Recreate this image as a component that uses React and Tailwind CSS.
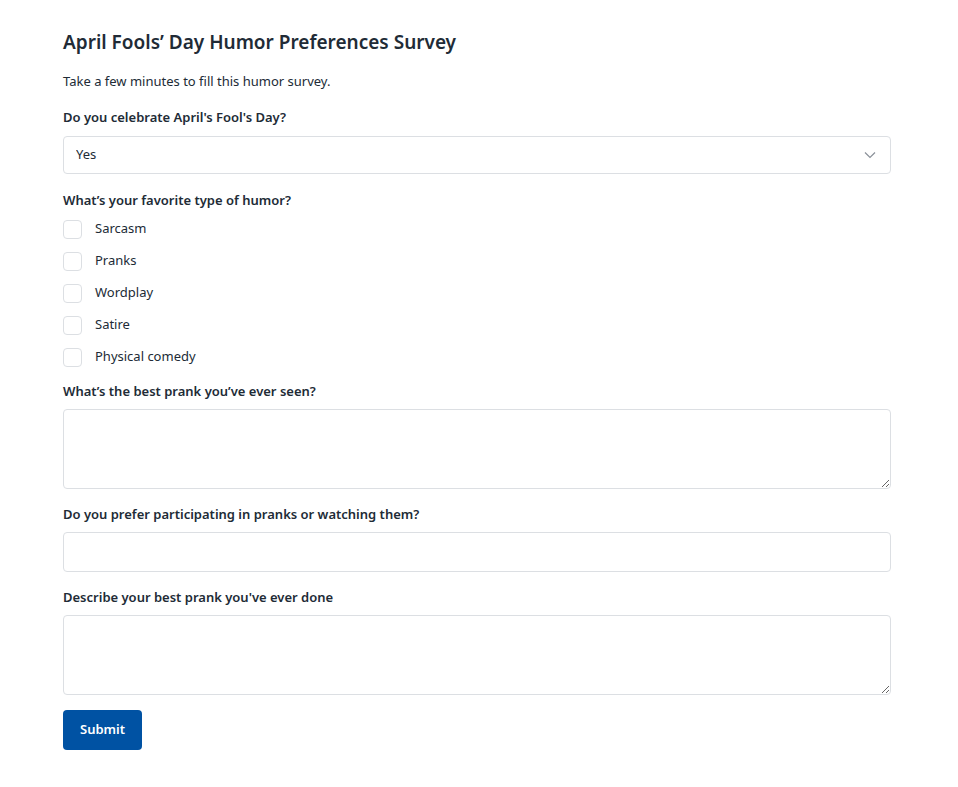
import React from 'react';

const humorTypes = ['Sarcasm', 'Pranks', 'Wordplay', 'Satire', 'Physical comedy'];

const Label = ({ children }) => (
    <label className="block text-[13px] leading-[20px] font-semibold text-[#212b36]">{children}</label>
);

export default function App() {
    return (
        <div
            className="min-h-screen bg-white pl-[63px] pr-[67px] pt-[28px] pb-10 text-[#212b36]"
            style={{ fontFamily: '"Segoe UI", "Noto Sans", "Open Sans", sans-serif' }}
        >
            <h1 className="text-[19px] leading-[28px] font-semibold">April Fools’ Day Humor Preferences Survey</h1>
            <p className="mt-[15px] text-[13px] leading-[20px]">Take a few minutes to fill this humor survey.</p>

            <div className="mt-[16px]">
                <Label>Do you celebrate April's Fool's Day?</Label>
                <div className="relative mt-[9px]">
                    <select className="appearance-none w-full h-[38px] rounded-[4px] border border-[#dcdfe3] bg-white pl-[12px] pr-10 text-[13px] outline-none">
                        <option>Yes</option>
                        <option>No</option>
                    </select>
                    <svg className="absolute right-[15px] top-[15px] pointer-events-none" width="12" height="8" viewBox="0 0 12 8" fill="none">
                        <path d="M1 1.5l5 5 5-5" stroke="#8a9099" strokeWidth="1.2" />
                    </svg>
                </div>
            </div>

            <div className="mt-[16px]">
                <Label>What’s your favorite type of humor?</Label>
                <div className="mt-[9px] flex flex-col gap-[12px]">
                    {humorTypes.map((t) => (
                        <label key={t} className="flex items-center h-[20px] text-[13px]">
                            <input type="checkbox" className="appearance-none w-[19px] h-[19px] rounded-[4px] border border-[#dcdfe3] bg-white" />
                            <span className="ml-[13px]">{t}</span>
                        </label>
                    ))}
                </div>
            </div>

            <div className="mt-[14px]">
                <Label>What’s the best prank you’ve ever seen?</Label>
                <textarea className="block mt-[8px] w-full h-[80px] rounded-[4px] border border-[#dcdfe3] px-3 py-2 text-[13px] outline-none" />
            </div>

            <div className="mt-[15px]">
                <Label>Do you prefer participating in pranks or watching them?</Label>
                <input type="text" className="block mt-[8px] w-full h-[40px] rounded-[4px] border border-[#dcdfe3] px-3 text-[13px] outline-none" />
            </div>

            <div className="mt-[15px]">
                <Label>Describe your best prank you've ever done</Label>
                <textarea className="block mt-[8px] w-full h-[80px] rounded-[4px] border border-[#dcdfe3] px-3 py-2 text-[13px] outline-none" />
            </div>

            <button className="mt-[15px] h-[40px] w-[79px] rounded-[4px] bg-[#0052a3] text-white text-[13px] font-semibold">
                Submit
            </button>
        </div>
    );
}
